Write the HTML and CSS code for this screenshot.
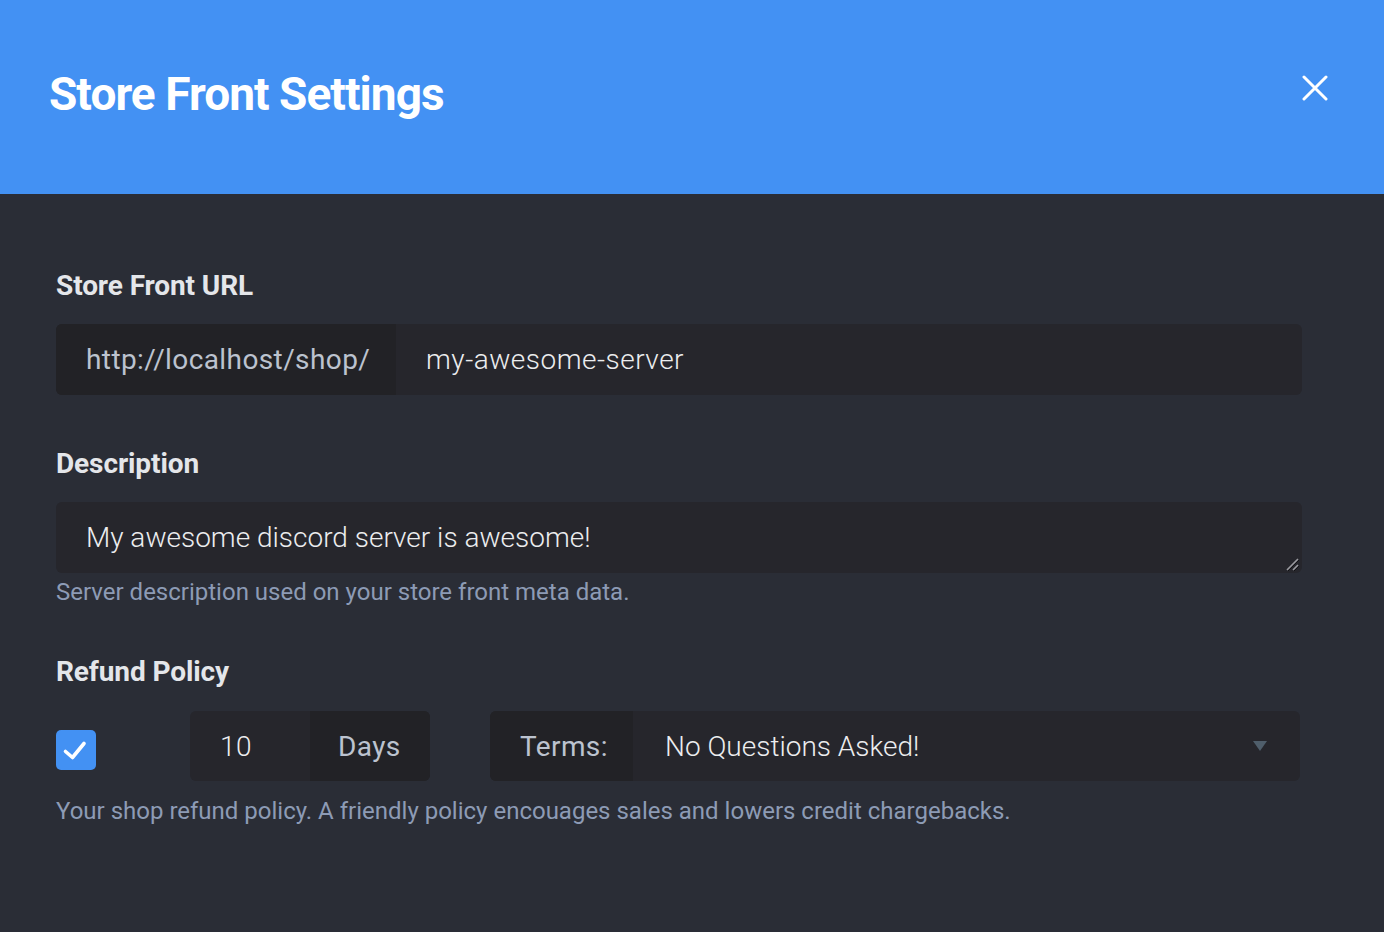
FILE: index.html
```html
<!DOCTYPE html>
<html lang="en">
<head>
<meta charset="utf-8">
<title>Store Front Settings</title>
<link rel="stylesheet" href="styles.css">
</head>
<body>
<header class="modal-header">
  <h1 class="modal-title">Store Front Settings</h1>
  <button class="close-btn" aria-label="Close">
    <svg width="26" height="26" viewBox="0 0 26 26"><path d="M2 2 L24 24 M24 2 L2 24" stroke="#fff" stroke-width="3" stroke-linecap="round"/></svg>
  </button>
</header>
<main class="modal-body">
  <section class="field">
    <div class="label">Store Front URL</div>
    <div class="input-group">
      <span class="addon addon-url">http://localhost/shop/</span>
      <span class="input-value">my-awesome-server</span>
    </div>
  </section>
  <section class="field field-desc">
    <div class="label">Description</div>
    <div class="textarea">
      <span class="input-value">My awesome discord server is awesome!</span>
      <svg class="grip" width="14" height="14" viewBox="0 0 14 14"><path d="M2 13 L13 2 M8 13 L13 8" stroke="#9a9aa0" stroke-width="1.6"/><path d="M3 14 L14 3 M9 14 L14 9" stroke="#111114" stroke-width="1"/></svg>
    </div>
    <div class="help">Server description used on your store front meta data.</div>
  </section>
  <section class="field field-refund">
    <div class="label">Refund Policy</div>
    <div class="refund-row">
      <span class="checkbox">
        <svg width="40" height="40" viewBox="0 0 40 40"><path d="M9.5 21.5 L16.5 27.5 L28 13.5" fill="none" stroke="#fff" stroke-width="3.6" stroke-linecap="round" stroke-linejoin="round"/></svg>
      </span>
      <div class="input-group days-group">
        <span class="input-value days-value">10</span>
        <span class="addon addon-days">Days</span>
      </div>
      <div class="input-group terms-group">
        <span class="addon addon-terms">Terms:</span>
        <span class="input-value select-value">No Questions Asked!</span>
        <span class="caret"></span>
      </div>
    </div>
    <div class="help">Your shop refund policy. A friendly policy encouages sales and lowers credit chargebacks.</div>
  </section>
</main>
</body>
</html>
```
FILE: styles.css
```css
html, body {
  margin: 0;
  padding: 0;
}
body {
  background: #2a2d36;
  font-family: Roboto, "Liberation Sans", sans-serif;
  min-height: 932px;
}
.modal-header {
  height: 194px;
  box-sizing: border-box;
  background: #4391f3;
  display: flex;
  justify-content: space-between;
  align-items: flex-start;
  padding: 64px 56px 0 49px;
}
.modal-title {
  margin: 0;
  color: #fff;
  font-size: 46px;
  line-height: 60px;
  font-weight: 700;
  letter-spacing: -0.95px;
}
.close-btn {
  background: none;
  border: 0;
  padding: 0;
  margin-top: 11px;
  width: 26px;
  height: 26px;
  cursor: pointer;
}
.close-btn svg { display: block; }
.modal-body {
  padding: 74px 82px 0 56px;
}
.label {
  color: #e4e6ea;
  font-size: 28px;
  line-height: 36px;
  font-weight: 700;
  letter-spacing: -0.1px;
  margin-bottom: 20px;
}
.input-group {
  display: flex;
  height: 71px;
  background: #26262c;
  border-radius: 6px;
  overflow: hidden;
  align-items: stretch;
}
.addon {
  background: #222226;
  color: #bcc3cf;
  font-size: 28px;
  display: flex;
  align-items: center;
  letter-spacing: 0.4px;
}
.addon-url {
  width: 340px;
  box-sizing: border-box;
  padding-left: 30px;
}
.input-value {
  color: #ecedef;
  font-size: 28px;
  font-weight: 300;
  display: flex;
  align-items: center;
  letter-spacing: 0.5px;
  padding-left: 30px;
}
.field-desc { margin-top: 51px; }
.textarea {
  position: relative;
  height: 71px;
  background: #26262c;
  border-radius: 6px;
  display: flex;
}
.textarea .input-value { letter-spacing: 0px; }
.grip {
  position: absolute;
  right: 3px;
  bottom: 2px;
}
.help {
  color: #8d9bb5;
  font-size: 24px;
  line-height: 30px;
  letter-spacing: 0px;
  margin-top: 4px;
}
.field-refund { margin-top: 47px; }
.field-refund .label { margin-bottom: 21px; }
.refund-row {
  display: flex;
  align-items: center;
  height: 70px;
}
.checkbox {
  width: 40px;
  height: 40px;
  border-radius: 5px;
  background: #4391f3;
  margin-top: 8px;
  flex: none;
}
.checkbox svg { display: block; }
.days-group {
  margin-left: 94px;
  width: 240px;
  height: 70px;
}
.days-value {
  width: 120px;
  box-sizing: border-box;
}
.addon-days {
  width: 120px;
  box-sizing: border-box;
  padding-left: 28px;
}
.terms-group {
  margin-left: 60px;
  width: 810px;
  height: 70px;
  position: relative;
}
.addon-terms {
  width: 143px;
  box-sizing: border-box;
  padding-left: 30px;
}
.select-value {
  padding-left: 32px;
  font-weight: 300;
  letter-spacing: 0px;
}
.caret {
  position: absolute;
  right: 33px;
  top: 30px;
  width: 0;
  height: 0;
  border-left: 7px solid transparent;
  border-right: 7px solid transparent;
  border-top: 10px solid #4f5e6b;
}
.field-refund .help { margin-top: 15px; }
```
